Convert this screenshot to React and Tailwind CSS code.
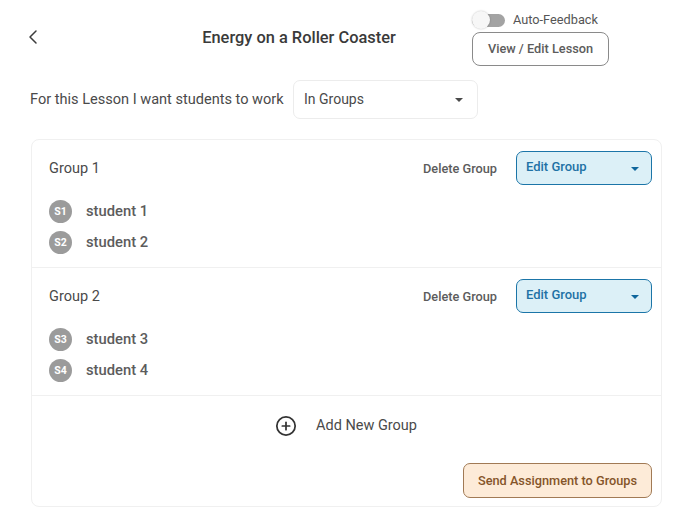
import { ChevronLeft, CirclePlus } from 'lucide-react';

const groups = [
  { name: 'Group 1', students: [['S1', 'student 1'], ['S2', 'student 2']] },
  { name: 'Group 2', students: [['S3', 'student 3'], ['S4', 'student 4']] },
];

function Caret({ className }) {
  return <span className={`w-0 h-0 border-x-[4px] border-x-transparent border-t-[4px] ${className}`} />;
}

function Group({ group }) {
  return (
    <div className="h-[128px] border-b border-[#f0f0f0] pt-[10px] pl-[17px] pr-[9px]">
      <div className="flex items-center h-[35px]">
        <div className="text-[14.5px] text-[#4a4a4a] flex-1 mt-[2px]">{group.name}</div>
        <div className="text-[12.75px] font-medium text-[#5c5c5c] mr-[19px] mt-[2px]">Delete Group</div>
        <div className="w-[136px] h-[34px] rounded-[7px] border border-[#1b75a8] bg-[#dcf0f7] flex items-center justify-between pl-[9px] pr-[12px] pb-[1px]">
          <span className="text-[13px] font-medium text-[#1f72a5] mb-[1px]">Edit Group</span>
          <Caret className="border-t-[#0f669c] mt-[3px]" />
        </div>
      </div>
      <div className="mt-[15px] flex flex-col gap-[8px]">
        {group.students.map(([initials, label]) => (
          <div key={initials} className="flex items-center h-[23px]">
            <div className="w-[23px] h-[23px] rounded-full bg-[#9b9b9b] text-white text-[10.5px] font-bold flex items-center justify-center">{initials}</div>
            <div className="ml-[14px] text-[14.75px] font-medium text-[#5c5c5c]">{label}</div>
          </div>
        ))}
      </div>
    </div>
  );
}

export default function App() {
  return (
    <div className="w-[688px] h-[518px] bg-white overflow-hidden font-['Roboto',sans-serif]">
      <div className="flex h-[81px] pl-[21px]">
        <div className="pt-[25px] w-[140px]">
          <ChevronLeft size={24} strokeWidth={1.5} className="text-[#3c3c3c]" />
        </div>
        <div className="w-[276px] pt-[26px] text-center text-[16.4px] font-medium text-[#3a3a3a]">Energy on a Roller Coaster</div>
        <div className="pt-[10px] ml-[35px]">
          <div className="flex items-center h-[20px] mb-[2px]">
            <div className="relative w-[33px] h-[13px] rounded-full bg-[#a3a3a3]">
              <div className="absolute left-0 top-[-3px] w-[18px] h-[18px] rounded-full bg-[#f7f7f7] shadow-[0_0_2px_rgba(0,0,0,0.25)]" />
            </div>
            <span className="ml-[8px] text-[12.75px] text-[#555555]">Auto-Feedback</span>
          </div>
          <div className="w-[137px] h-[34px] rounded-[8px] border border-[#8a8a8a] flex items-center justify-center text-[12.75px] font-medium text-[#5c5c5c]">View / Edit Lesson</div>
        </div>
      </div>

      <div className="flex items-center pl-[30px]">
        <div className="text-[14.55px] text-[#4a4a4a] w-[263px]">For this Lesson I want students to work</div>
        <div className="w-[185px] h-[39px] -mt-[1px] rounded-[7px] border border-[#ececec] flex items-center justify-between pl-[10px] pr-[14px]">
          <span className="text-[14px] text-[#4a4a4a] mb-[1px]">In Groups</span>
          <Caret className="border-t-[#4a4a4a]" />
        </div>
      </div>

      <div className="mt-[20px] ml-[31px] w-[631px] h-[368px] rounded-[8px] border border-[#f0f0f0]">
        {groups.map((group) => <Group key={group.name} group={group} />)}
        <div className="flex items-center h-[59px] pl-[243px]">
          <CirclePlus size={22} strokeWidth={1.9} className="text-[#333333]" />
          <span className="ml-[19px] text-[14.5px] text-[#4a4a4a]">Add New Group</span>
        </div>
        <div className="flex justify-end pr-[9px] pt-[8px]">
          <div className="w-[189px] h-[35px] rounded-[7px] border border-[#a17a55] bg-[#fdebd8] flex items-center justify-center text-[12.75px] font-medium text-[#85552a]">Send Assignment to Groups</div>
        </div>
      </div>
    </div>
  );
}
